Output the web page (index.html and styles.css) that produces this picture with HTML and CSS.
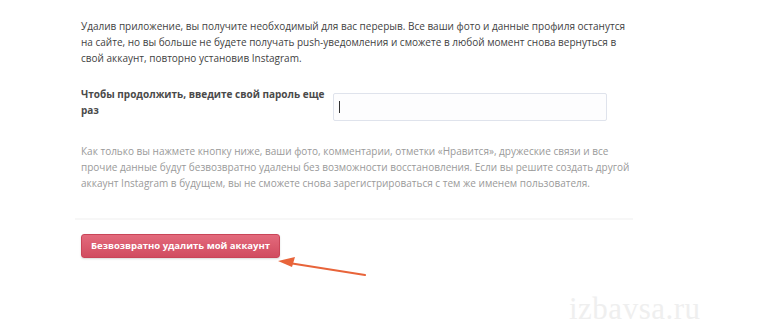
FILE: index.html
```html
<!DOCTYPE html>
<html lang="ru">
<head>
<meta charset="utf-8">
<title>Удалить аккаунт</title>
<link rel="stylesheet" href="styles.css">
</head>
<body>
<div class="page">
  <div class="content">
    <p class="intro">Удалив приложение, вы получите необходимый для вас перерыв. Все ваши фото и данные профиля останутся на сайте, но вы больше не будете получать push-уведомления и сможете в любой момент снова вернуться в свой аккаунт, повторно установив Instagram.</p>
    <div class="field">
      <label class="label" for="pw">Чтобы продолжить, введите свой пароль еще раз</label>
      <div class="input"><span class="caret"></span></div>
    </div>
    <p class="note">Как только вы нажмете кнопку ниже, ваши фото, комментарии, отметки «Нравится», дружеские связи и все прочие данные будут безвозвратно удалены без возможности восстановления. Если вы решите создать другой аккаунт Instagram в будущем, вы не сможете снова зарегистрироваться с тем же именем пользователя.</p>
    <div class="divider"></div>
    <div class="actions">
      <button class="danger" type="button">Безвозвратно удалить мой аккаунт</button>
    </div>
  </div>
  <svg class="arrow" width="100" height="30" viewBox="0 0 100 30">
    <line x1="90" y1="22" x2="14" y2="10" stroke="#e8643a" stroke-width="2" stroke-linecap="round"/>
    <polygon points="3,8 20,4 17,14" fill="#e8643a"/>
  </svg>
  <div class="watermark">izbavsa.ru</div>
</div>
</body>
</html>
```

FILE: styles.css
```css
html, body {
  margin: 0;
  padding: 0;
  background: #ffffff;
}
.page {
  position: relative;
  width: 770px;
  height: 330px;
  overflow: hidden;
  font-family: "Open Sans", "Noto Sans", sans-serif;
}
.content {
  width: 552px;
  padding: 18px 0 0 81px;
}
.intro {
  margin: 0;
  font-size: 10px;
  line-height: 16px;
  color: #3f3f3f;
}
.field {
  display: flex;
  align-items: flex-start;
  margin-top: 20px;
}
.label {
  width: 245px;
  font-size: 10px;
  line-height: 16px;
  font-weight: 700;
  color: #4a4a4a;
}
.input {
  margin: 7px 0 0 7px;
  width: 267px;
  height: 26px;
  border: 1px solid #dfe3ec;
  border-radius: 2px;
  background: #fdfdfe;
  display: flex;
  align-items: center;
  padding-left: 5px;
}
.caret {
  width: 1px;
  height: 12px;
  background: #333;
}
.note {
  margin: 22px 0 0 0;
  font-size: 10px;
  line-height: 16px;
  color: #9a9a9a;
}
.divider {
  margin-top: 27px;
  margin-left: -6px;
  height: 2px;
  background: #f7f7f7;
}
.actions {
  margin-top: 12px;
}
.danger {
  width: 199px;
  height: 24px;
  border: 1px solid #c94558;
  border-radius: 3px;
  background: linear-gradient(#e36a7c, #d14c60);
  color: #ffffff;
  font-family: "Open Sans", "Noto Sans", sans-serif;
  font-size: 9.5px;
  font-weight: 700;
  padding: 0;
  box-shadow: 0 1px 2px rgba(0,0,0,0.15);
}
.arrow {
  position: absolute;
  left: 275px;
  top: 253px;
}
.watermark {
  position: absolute;
  left: 569px;
  top: 291px;
  font-family: "Liberation Serif", serif;
  font-size: 31px;
  color: #efefef;
  letter-spacing: 0.5px;
}
```
